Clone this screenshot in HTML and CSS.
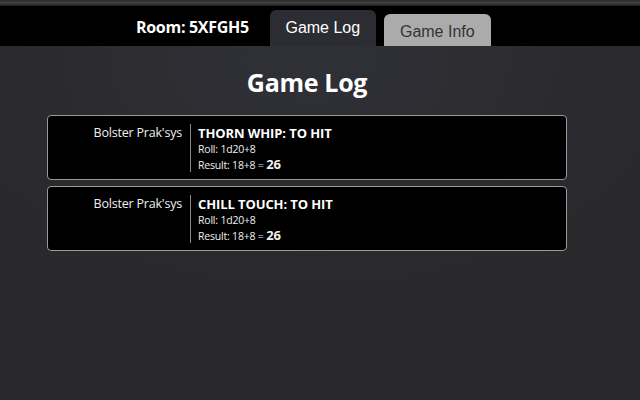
FILE: index.html
```html
<!DOCTYPE html>
<html>
<head>
<meta charset="utf-8">
<link rel="stylesheet" href="styles.css">
</head>
<body>
<div class="topstrip"></div>
<nav class="navbar">
  <span class="room">Room: 5XFGH5</span>
  <span class="tab tab-active">Game Log</span>
  <span class="tab tab-inactive">Game Info</span>
</nav>
<main class="content">
  <h1 class="title">Game Log</h1>
  <div class="log">
    <div class="entry">
      <div class="who">Bolster Prak'sys</div>
      <div class="what">
        <div class="action">THORN WHIP: TO HIT</div>
        <div class="line">Roll: 1d20+8</div>
        <div class="line">Result: 18+8 = <b class="total">26</b></div>
      </div>
    </div>
    <div class="entry">
      <div class="who">Bolster Prak'sys</div>
      <div class="what">
        <div class="action">CHILL TOUCH: TO HIT</div>
        <div class="line">Roll: 1d20+8</div>
        <div class="line">Result: 18+8 = <b class="total">26</b></div>
      </div>
    </div>
  </div>
</main>
</body>
</html>
```
FILE: styles.css
```css
html, body {
  margin: 0;
  padding: 0;
  height: 100%;
}
body {
  background: radial-gradient(ellipse 420px 260px at 310px 60px, #303137 0%, #2b2b2f 60%, #29292c 100%);
  background-color: #2a2a2d;
  font-family: "Open Sans", "Noto Sans", sans-serif;
  color: #fff;
  overflow: hidden;
}
.topstrip {
  height: 6px;
  background: linear-gradient(#2a2a2a, #444 50%, #1a1a1a);
}
.navbar {
  height: 40px;
  background: #000;
  display: flex;
  align-items: flex-end;
  padding-left: 136px;
}
.room {
  align-self: center;
  font-weight: 700;
  font-size: 16px;
  letter-spacing: -0.3px;
  margin-right: 21px;
  margin-top: 2px;
}
.tab {
  font-family: "Liberation Sans", Arial, sans-serif;
  font-size: 16px;
  border-radius: 6px 6px 0 0;
  box-sizing: border-box;
  text-align: center;
}
.tab-active {
  width: 106px;
  height: 36px;
  padding-top: 9px;
  background: #2c2d32;
  color: #fff;
  margin-right: 8px;
}
.tab-inactive {
  width: 107px;
  height: 32px;
  padding-top: 9px;
  background: #ababab;
  color: #333;
}
.content {
  padding: 0 73px 0 47px;
}
.title {
  margin: 19px 0 16px;
  text-align: center;
  font-size: 25px;
  font-weight: 700;
  line-height: 34px;
  letter-spacing: -0.3px;
}
.log {
  display: flex;
  flex-direction: column;
  gap: 6px;
}
.entry {
  display: flex;
  background: #000;
  border: 1px solid #9a9a9a;
  border-radius: 4px;
  padding: 8px 0 7px;
  height: 65px;
  box-sizing: border-box;
}
.who {
  width: 143px;
  box-sizing: border-box;
  padding-right: 8px;
  text-align: right;
  font-size: 12.5px;
  color: #f0f0f0;
  border-right: 1px solid #888;
  line-height: 17px;
  letter-spacing: -0.2px;
}
.what {
  padding-left: 7px;
}
.action {
  font-weight: 700;
  font-size: 13px;
  line-height: 18px;
  letter-spacing: -0.1px;
}
.line {
  font-size: 10.5px;
  line-height: 15px;
  letter-spacing: -0.2px;
  color: #f0f0f0;
}
.total {
  font-size: 13px;
}
```
